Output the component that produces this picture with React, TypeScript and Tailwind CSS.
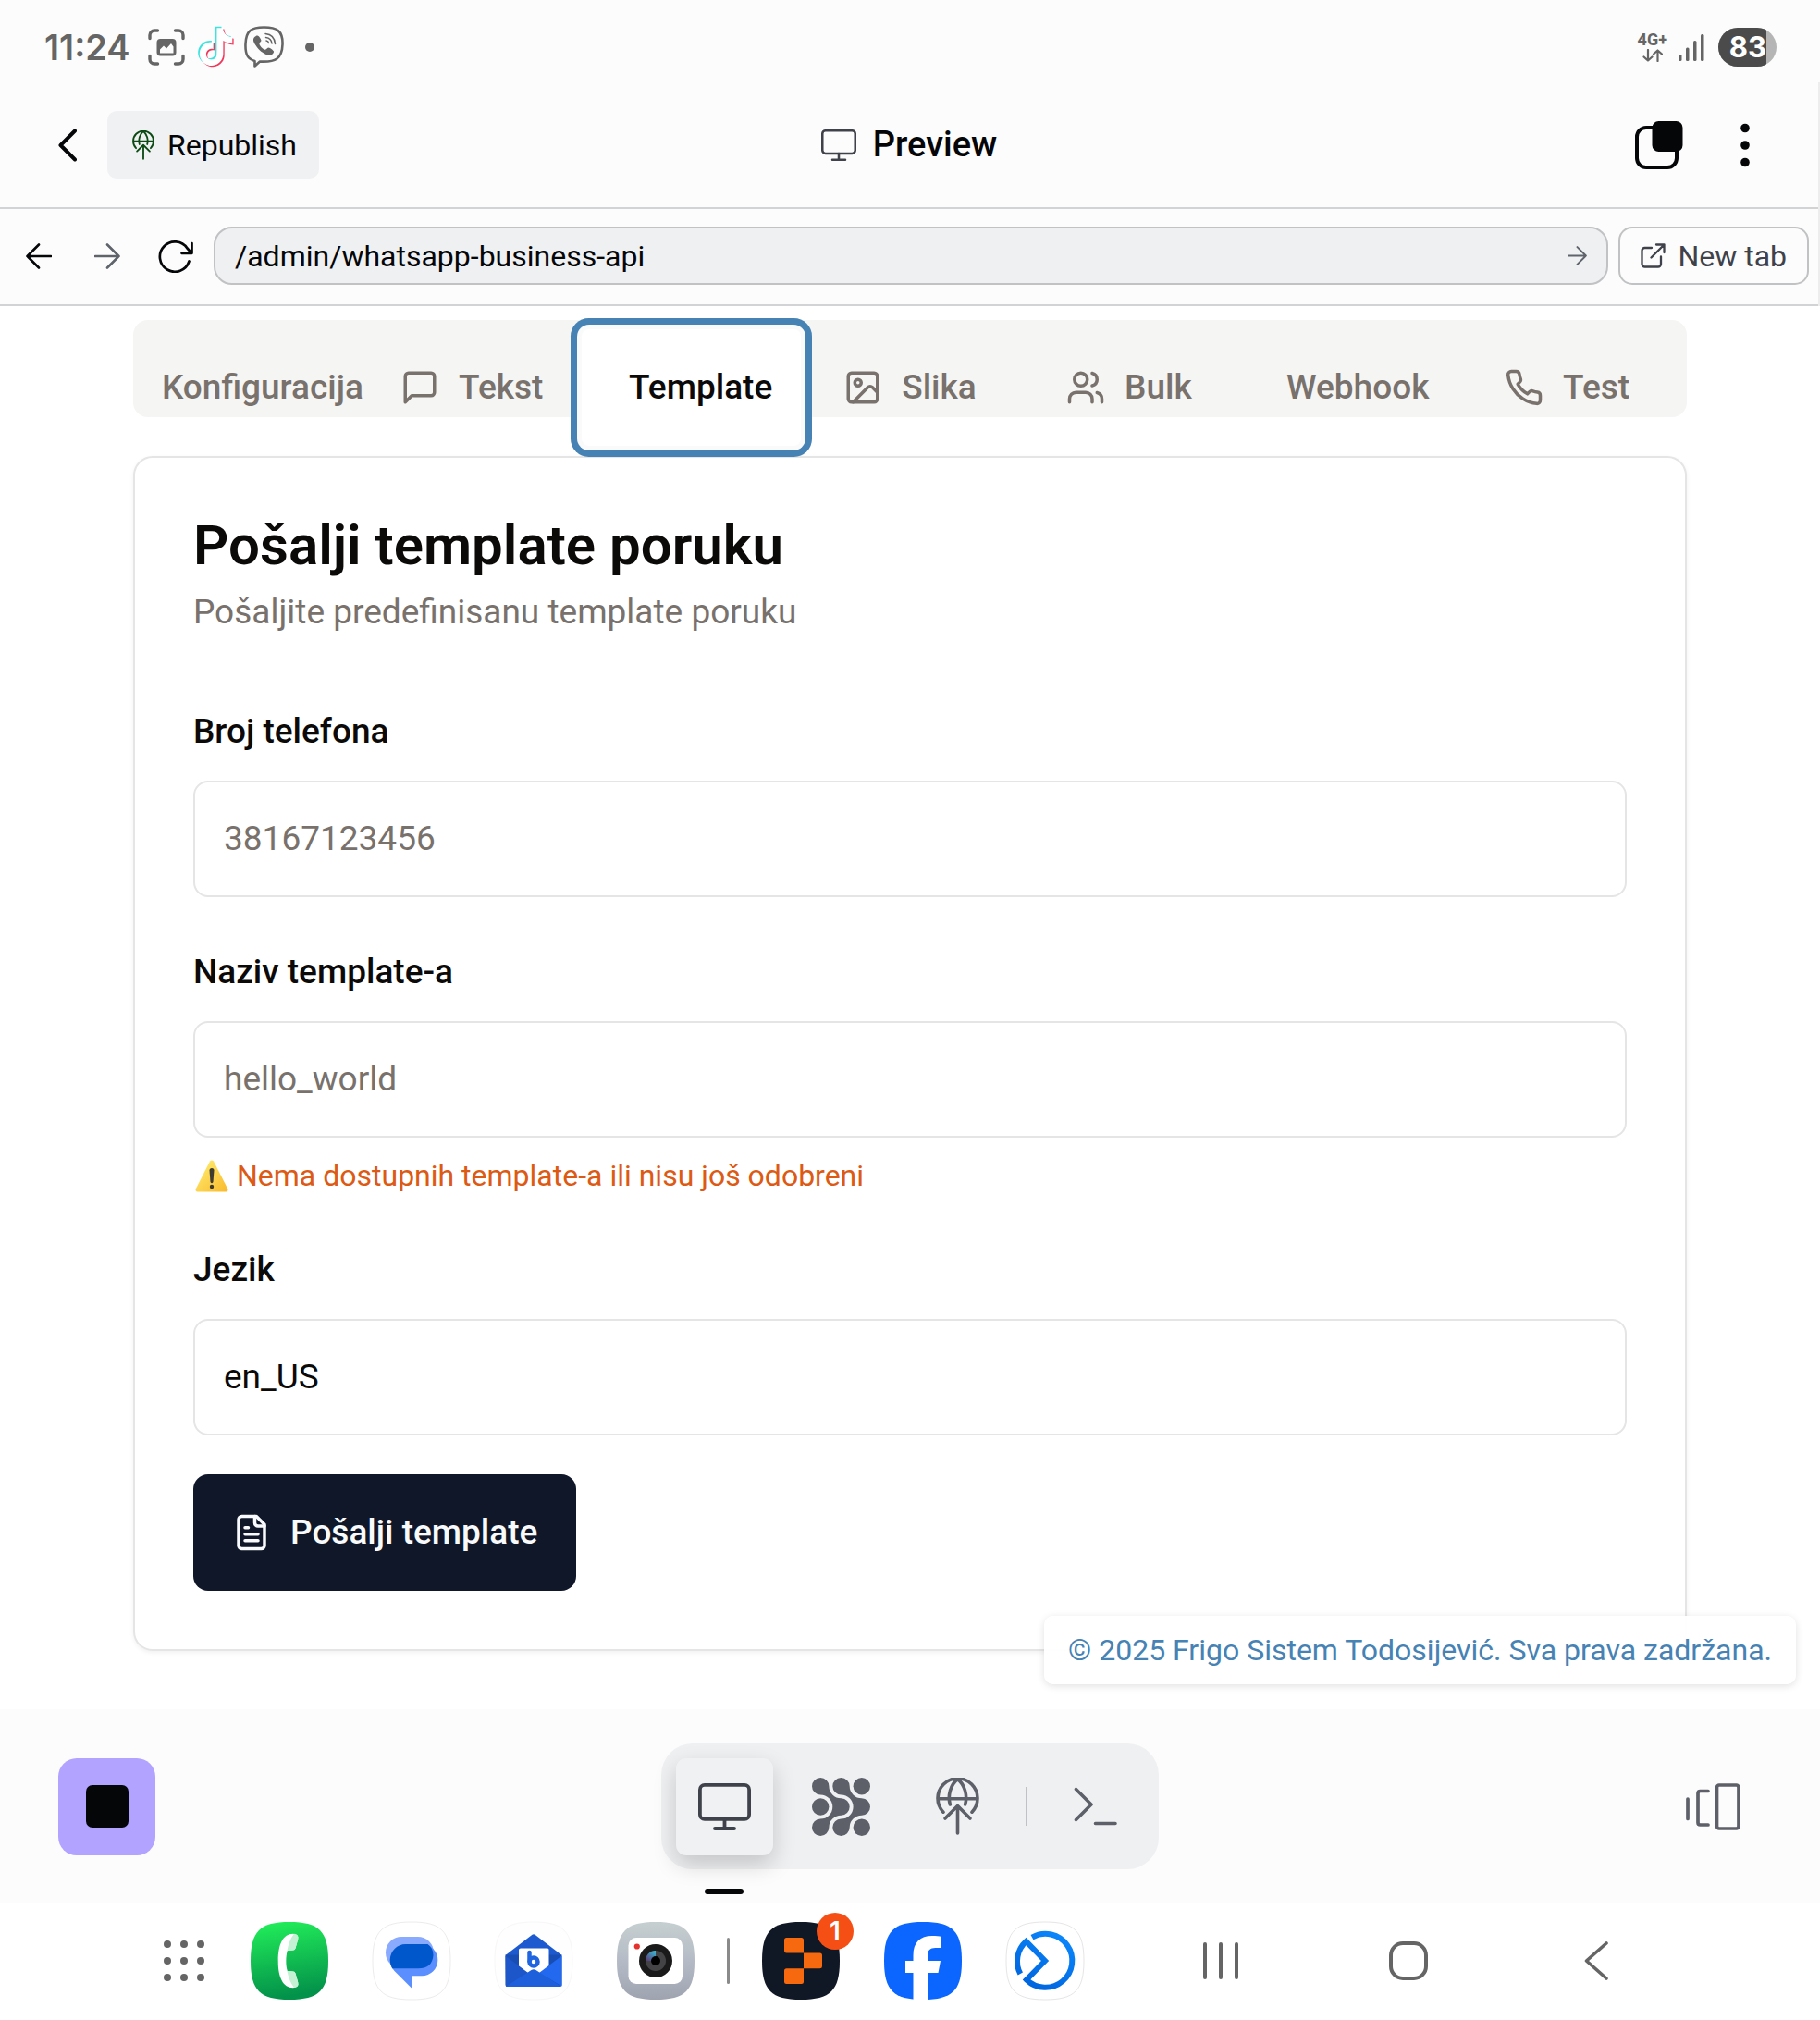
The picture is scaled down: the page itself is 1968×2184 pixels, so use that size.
import React from "react";

const ROBOTO = "font-['Roboto','Noto_Sans',sans-serif]";
const INTER = "font-['Inter',sans-serif]";
const SQUIRCLE = "M42 0C74 0 84 10 84 42S74 84 42 84 0 74 0 42 10 0 42 0Z";

/* ---------- line icons ---------- */

function Line({ className, children }: { className?: string; children: React.ReactNode }) {
  return (
    <svg viewBox="0 0 24 24" fill="none" stroke="currentColor" strokeWidth="2" strokeLinecap="round" strokeLinejoin="round" className={className ?? "size-[42px] shrink-0"} aria-hidden="true">
      {children}
    </svg>
  );
}

const MessageIcon = () => (
  <Line><path d="M21 15a2 2 0 0 1-2 2H7l-4 4V5a2 2 0 0 1 2-2h14a2 2 0 0 1 2 2z" /></Line>
);
const ImageIcon = () => (
  <Line>
    <rect x="3" y="3" width="18" height="18" rx="2" />
    <circle cx="9" cy="9" r="2" />
    <path d="m21 15-3.086-3.086a2 2 0 0 0-2.828 0L6 21" />
  </Line>
);
const UsersIcon = () => (
  <Line>
    <path d="M16 21v-2a4 4 0 0 0-4-4H6a4 4 0 0 0-4 4v2" />
    <circle cx="9" cy="7" r="4" />
    <path d="M22 21v-2a4 4 0 0 0-3-3.87M16 3.13a4 4 0 0 1 0 7.75" />
  </Line>
);
const PhoneIcon = () => (
  <Line>
    <path d="M22 16.92v3a2 2 0 0 1-2.18 2 19.79 19.79 0 0 1-8.63-3.07 19.5 19.5 0 0 1-6-6 19.79 19.79 0 0 1-3.07-8.67A2 2 0 0 1 4.11 2h3a2 2 0 0 1 2 1.72 12.84 12.84 0 0 0 .7 2.81 2 2 0 0 1-.45 2.11L8.09 9.91a16 16 0 0 0 6 6l1.27-1.27a2 2 0 0 1 2.11-.45 12.84 12.84 0 0 0 2.81.7A2 2 0 0 1 22 16.92z" />
  </Line>
);
const FileIcon = () => (
  <Line>
    <path d="M15 2H6a2 2 0 0 0-2 2v16a2 2 0 0 0 2 2h12a2 2 0 0 0 2-2V7Z" />
    <path d="M14 2v4a2 2 0 0 0 2 2h4M10 9H8M16 13H8M16 17H8" />
  </Line>
);

function MonitorIcon({ className }: { className: string }) {
  return (
    <svg viewBox="0 0 57 51" fill="none" stroke="currentColor" strokeWidth="3.8" strokeLinecap="round" className={className} aria-hidden="true">
      <rect x="1.9" y="1.9" width="53.2" height="37" rx="5" />
      <path d="M28.5 39v10M18 49h21" />
    </svg>
  );
}

function PublishIcon({ className }: { className: string }) {
  return (
    <svg viewBox="0 0 47 62" fill="none" stroke="currentColor" strokeWidth="3.6" strokeLinecap="round" strokeLinejoin="round" className={className} aria-hidden="true">
      <path d="M8 37.2A21.5 21.5 0 1 1 39 37.2M2 22.7H45" />
      <path d="M23.5 1.5C16 7.5 12.500 19 15.300 29M23.500 1.500C31 7.500 34.500 19 31.700 29" />
      <path d="M23.500 60V30.500M10 44L23.500 30.500L37 44" />
    </svg>
  );
}

function ArrowIcon({ className, flip }: { className: string; flip?: boolean }) {
  return (
    <svg viewBox="0 0 28 28" fill="none" stroke="currentColor" strokeWidth="2.600" strokeLinecap="round" strokeLinejoin="round" className={className} aria-hidden="true">
      {flip ? <path d="M27 14H1.500M14 1.500L1.500 14L14 26.500" /> : <path d="M1 14H26.500M14 1.500L26.500 14L14 26.500" />}
    </svg>
  );
}

/* ---------- status bar ---------- */

const TIKTOK =
  "M12.525.02c1.31-.02 2.61-.01 3.91-.02.08 1.53.63 3.09 1.75 4.17 1.12 1.11 2.7 1.62 4.24 1.79v4.03c-1.44-.05-2.89-.35-4.2-.97-.57-.26-1.1-.59-1.62-.93-.01 2.92.01 5.84-.02 8.75-.08 1.4-.54 2.79-1.35 3.94-1.31 1.92-3.58 3.17-5.91 3.21-1.43.08-2.86-.31-4.08-1.03-2.02-1.19-3.44-3.37-3.65-5.71-.02-.5-.03-1-.01-1.49.18-1.9 1.12-3.72 2.58-4.96 1.66-1.44 3.98-2.13 6.15-1.72.02 1.48-.04 2.96-.04 4.44-.99-.32-2.15-.23-3.02.37-.63.41-1.11 1.04-1.36 1.75-.21.51-.15 1.07-.14 1.61.24 1.64 1.82 3.02 3.5 2.87 1.12-.01 2.19-.66 2.77-1.61.19-.33.4-.67.41-1.06.1-1.79.06-3.57.07-5.36.01-4.03-.01-8.05.02-12.07z";

function StatusBar() {
  return (
    <div className="flex h-[89px] items-center justify-between pt-3 pr-[47px] pl-12 text-[#656565]">
      <div className="flex items-center">
        <span className={`${INTER} text-[38px] leading-none font-semibold`}>11:24</span>
        <svg viewBox="0 0 40 40" className="ml-[19px] size-10" fill="none" stroke="currentColor" strokeWidth="3.400" strokeLinecap="round" aria-hidden="true">
          <path d="M2 10.500V7a5 5 0 0 1 5-5h3.500M29.500 2H33a5 5 0 0 1 5 5v3.500M38 29.500V33a5 5 0 0 1-5 5h-3.500M10.500 38H7a5 5 0 0 1-5-5v-3.500" />
          <rect x="9.500" y="11" width="21" height="18.500" rx="4" fill="currentColor" stroke="none" />
          <path d="M13 26.500v-4l4-4 3 3 5-5.500 2.500 3.500v7z" fill="#fcfcfc" stroke="none" />
        </svg>
        <svg viewBox="0 0 24 26.600" className="ml-[13px] h-[45px] w-10" aria-hidden="true">
          <g transform="translate(-0.900 0.300) scale(1.020)"><path d={TIKTOK} fill="#3ce4e0" /></g>
          <g transform="translate(0.900 1.900) scale(1.020)"><path d={TIKTOK} fill="#f0385a" /></g>
          <g transform="translate(0.100 1.100) scale(1.020)"><path d={TIKTOK} fill="#ffffff" /></g>
        </svg>
        <svg viewBox="0 0 43 45" className="ml-[11px] h-[45px] w-[43px]" fill="none" stroke="currentColor" aria-hidden="true">
          <path d="M21.500 1.500C8 1.500 2 5 1.500 19.500C1 32 4.500 36 11.500 38V43.500L17 38.500C34 39.500 41 35.500 41.500 20C42 5 35 1.500 21.500 1.500Z" strokeWidth="2.600" strokeLinejoin="round" />
          <path d="M12 11.500C9 13.500 9.500 17 12.500 21C16 26.500 20 29.500 26 32C30 32.500 32.500 29 32 27.500C30 25 27.500 23.500 26 23.500C24 24.500 23.500 26.500 21.500 25.500C19 24 17.500 22 16.500 20C16 18 18 17.500 18.500 16C18 13.500 15.500 10.500 14.500 10.500C13.500 10.300 12.700 11 12 11.500Z" fill="currentColor" stroke="none" />
          <path d="M23 8.500c6 .5 10 4.500 10.500 11M23.500 12.500c4 .5 6 2.500 6.500 6.500M24 16c1.500.2 2.300 1 2.500 2.500" strokeWidth="1.500" strokeLinecap="round" />
        </svg>
        <span className="ml-[23px] size-[10px] rounded-full bg-[#656565]" />
      </div>
      <div className="flex items-center">
        <div className="flex flex-col items-center gap-[2px]">
          <span className={`${ROBOTO} text-[18px] leading-4 font-bold`}>4G+</span>
          <svg viewBox="0 0 22 14" className="h-[14px] w-[22px]" fill="none" stroke="currentColor" strokeWidth="2.200" strokeLinecap="round" strokeLinejoin="round" aria-hidden="true">
            <path d="M6 1v11.500M1.500 8.500L6 12.500L10.500 8.500M16.500 13V1.500M12 5.500L16.500 1.500L21 5.500" />
          </svg>
        </div>
        <svg viewBox="0 0 28 30" className="ml-3 h-[30px] w-7" fill="currentColor" aria-hidden="true">
          <rect x="0" y="23" width="3.500" height="7" rx="1.500" />
          <rect x="8" y="15.500" width="3.500" height="14.500" rx="1.500" />
          <rect x="16" y="8" width="3.500" height="22" rx="1.500" />
          <rect x="24" y="1" width="3.500" height="29" rx="1.500" />
        </svg>
        <div className="ml-[15px] flex h-[42px] w-[63px] overflow-hidden rounded-full bg-[#b5b5b5]">
          <span className={`${INTER} flex w-[52px] items-center justify-end bg-[#4b4b4b] text-[31px] leading-none font-bold text-white`}>83</span>
        </div>
      </div>
    </div>
  );
}

/* ---------- app header and address bar ---------- */

function Header() {
  return (
    <header className="grid h-[137px] grid-cols-[1fr_auto_1fr] items-center border-b-2 border-[#d2d3d4] px-[63px] text-[#050608]">
      <div className="flex items-center gap-[21px]">
        <button aria-label="Back" className="flex h-16 w-8 items-center justify-start">
          <svg viewBox="0 0 20 36" className="h-9 w-5" fill="none" stroke="currentColor" strokeWidth="4" strokeLinecap="round" strokeLinejoin="round" aria-hidden="true">
            <path d="M18 2.500L2.500 18L18 33.500" />
          </svg>
        </button>
        <button className={`${ROBOTO} flex h-[73px] items-center gap-[14px] rounded-[10px] bg-[#eff1f3] pr-6 pl-[27px] text-[32px]`}>
          <PublishIcon className="h-8 w-6 text-[#0c4a14]" />
          Republish
        </button>
      </div>
      <h1 className={`${ROBOTO} flex items-center gap-[18px] text-[38px] font-medium`}>
        <MonitorIcon className="h-[34px] w-[38px] text-[#3f424a]" />
        Preview
      </h1>
      <div className="flex items-center justify-end gap-[51px]">
        <button aria-label="Tabs">
          <svg viewBox="0 0 52 52" className="size-[52px]" aria-hidden="true">
            <rect x="2" y="7" width="43" height="43" rx="10" fill="none" stroke="currentColor" strokeWidth="4" />
            <rect x="18.500" y="0" width="33" height="33" rx="7" fill="currentColor" />
          </svg>
        </button>
        <button aria-label="More" className="flex h-16 w-8 items-center justify-center">
          <svg viewBox="0 0 10 48" className="h-12 w-[10px]" fill="currentColor" aria-hidden="true">
            <circle cx="5" cy="5.500" r="4.800" />
            <circle cx="5" cy="24" r="4.800" />
            <circle cx="5" cy="42.500" r="4.800" />
          </svg>
        </button>
      </div>
    </header>
  );
}

function AddressBar() {
  return (
    <div className="flex h-[105px] items-center border-b-2 border-[#d2d3d4] pr-[10px] pb-[2px] pl-7 text-[#050608]">
      <button aria-label="Go back"><ArrowIcon flip className="size-7" /></button>
      <button aria-label="Go forward" className="ml-[46px] text-[#5f636b]"><ArrowIcon className="size-7" /></button>
      <button aria-label="Reload" className="ml-[41px]">
        <svg viewBox="0 0 38 36" className="h-9 w-[38px]" fill="none" stroke="currentColor" strokeWidth="2.700" strokeLinecap="round" strokeLinejoin="round" aria-hidden="true">
          <path d="M33.500 23.500A16.200 16.200 0 1 1 31.500 9.500L36 14.500M36.500 4V14.800H25.500" />
        </svg>
      </button>
      <div className="ml-[22px] flex h-[63px] flex-1 items-center rounded-[20px] border-2 border-[#c0c2c4] bg-[#eff0f2] px-[21px]">
        <input aria-label="Path" defaultValue="/admin/whatsapp-business-api" className={`${ROBOTO} min-w-0 flex-1 bg-transparent text-[32px] outline-none`} />
        <button aria-label="Go" className="text-[#5f636b]"><ArrowIcon className="size-[21px]" /></button>
      </div>
      <a href="#new-tab" className={`${ROBOTO} ml-[11px] flex h-[63px] items-center gap-[13px] rounded-[15px] border-2 border-[#c0c2c4] px-[22px] text-[32px] text-[#3f424a]`}>
        <svg viewBox="0 0 27 27" className="size-[27px]" fill="none" stroke="currentColor" strokeWidth="2.300" strokeLinecap="round" strokeLinejoin="round" aria-hidden="true">
          <path d="M12 5H4.500A3 3 0 0 0 1.500 8V22.500A3 3 0 0 0 4.500 25.500H19A3 3 0 0 0 22 22.500V14.500M17 1.500H25.500V10M25.500 1.500L11.500 15.500" />
        </svg>
        New tab
      </a>
    </div>
  );
}

/* ---------- page ---------- */

const TABS: { label: string; icon: React.ReactNode; active?: boolean }[] = [
  { label: "Konfiguracija", icon: null },
  { label: "Tekst", icon: <MessageIcon /> },
  { label: "Template", icon: null, active: true },
  { label: "Slika", icon: <ImageIcon /> },
  { label: "Bulk", icon: <UsersIcon /> },
  { label: "Webhook", icon: null },
  { label: "Test", icon: <PhoneIcon /> },
];

function TabList() {
  return (
    <div role="tablist" className="grid h-[105px] grid-cols-7 rounded-[16px] bg-[#f5f5f4] px-[11px] py-[10px]">
      {TABS.map((t) => (
        <button
          key={t.label}
          role="tab"
          aria-selected={!!t.active}
          className={
            t.active
              ? "relative z-10 flex h-[126px] items-center justify-center gap-[21px] rounded-[8px] bg-white text-[37px] font-medium text-[#0c0a09] shadow-[0_0_0_5px_#fafafa,0_0_0_12px_#4682b4]"
              : "flex h-[126px] items-center justify-center gap-[21px] text-[37px] font-medium text-[#78716c]"
          }
        >
          {t.icon ?? <span />}
          {t.label}
        </button>
      ))}
    </div>
  );
}

function Field({ id, label, placeholder, value, note }: { id: string; label: string; placeholder?: string; value?: string; note?: React.ReactNode }) {
  return (
    <div className="flex flex-col">
      <label htmlFor={id} className="mb-5 text-[37px] leading-[66px] font-medium">{label}</label>
      <input
        id={id}
        placeholder={placeholder}
        defaultValue={value}
        className="h-[126px] w-full rounded-[16px] border-2 border-[#e5e5e5] bg-white px-[31px] pb-[2px] text-[37px] outline-none placeholder:text-[#78716c]"
      />
      {note}
    </div>
  );
}

function WarningSign() {
  return (
    <svg viewBox="0 0 36 35" className="h-[35px] w-9" aria-hidden="true">
      <defs>
        <linearGradient id="warn" x1="0" y1="0" x2="1" y2="1">
          <stop offset="0" stopColor="#fff176" />
          <stop offset="1" stopColor="#f9b92b" />
        </linearGradient>
      </defs>
      <path d="M16 1.500Q18 -.5 20 1.500L35.300 31.500Q36 34.500 33.500 34.500H2.500Q0 34.500.7 31.500Z" fill="url(#warn)" />
      <path d="M15.500 11.500Q15.500 9 18 9T20.500 11.500L19.500 24Q18 26.500 16.500 24Z" fill="#3f3a30" />
      <circle cx="18" cy="29" r="2.200" fill="#3f3a30" />
    </svg>
  );
}

function Page() {
  return (
    <main className={`${ROBOTO} relative flex-1 bg-white px-36 pt-[15px] pb-[63px] text-[#0c0a09]`}>
      <TabList />
      <section className="mt-[42px] rounded-[21px] border-2 border-[#e5e5e5] bg-white p-[63px] shadow-[0_2px_5px_rgba(0,0,0,0.06)]">
        <h2 className="text-[60px] leading-[63px] font-semibold">Pošalji template poruku</h2>
        <p className="mt-[15px] text-[37px] leading-[52px] text-[#78716c]">Pošaljite predefinisanu template poruku</p>
        <form className="mt-[70px] flex flex-col gap-12">
          <Field id="phone" label="Broj telefona" placeholder="38167123456" />
          <Field
            id="template"
            label="Naziv template-a"
            placeholder="hello_world"
            note={
              <p className="mt-5 flex items-center gap-[9px] pl-[2px] text-[32px] leading-[42px] text-[#dc5a14]">
                <WarningSign />
                Nema dostupnih template-a ili nisu još odobreni
              </p>
            }
          />
          <div>
            <Field id="lang" label="Jezik" value="en_US" />
            <button type="button" className="mt-[42px] flex h-[126px] items-center gap-[21px] rounded-[16px] bg-[#0f1729] px-[42px] text-[37px] font-medium text-[#f8fafc]">
              <FileIcon />
              Pošalji template
            </button>
          </div>
        </form>
      </section>
      <p className="absolute right-[26px] bottom-[27px] flex h-[74px] items-center rounded-[10px] bg-white/95 px-[26px] text-[32px] text-[#4682b4] shadow-[0_2px_8px_rgba(0,0,0,0.12)]">
        © 2025 Frigo Sistem Todosijević. Sva prava zadržana.
      </p>
    </main>
  );
}

/* ---------- workspace dock ---------- */

const BLOB =
  "M9.200 0A9.200 9.200 0 0 1 18.400 9.200A13.100 13.100 0 0 0 31.500 22.300A9.200 9.200 0 0 1 31.500 40.700A13.100 13.100 0 0 0 18.400 53.800A9.200 9.200 0 1 1 9.200 44.600A13.100 13.100 0 0 0 9.200 18.400A9.200 9.200 0 0 1 9.200 0Z";

function Dock() {
  return (
    <div className="grid h-[210px] grid-cols-[1fr_auto_1fr] items-center bg-[#fcfcfc] px-[63px] text-[#5d6068]">
      <button aria-label="Stop" className="flex size-[105px] items-center justify-center rounded-[20px] bg-[#b1a3ff]">
        <span className="size-[46px] rounded-[7px] bg-[#050608]" />
      </button>
      <div className="flex h-[136px] items-center gap-[21px] rounded-[34px] bg-[#eff0f2] px-4">
        <button aria-label="Preview" className="relative flex size-[105px] items-center justify-center rounded-[11px] bg-[#f0f1f3] text-[#3f424a] shadow-[0_10px_24px_rgba(0,0,0,0.18)]">
          <MonitorIcon className="h-[51px] w-[57px]" />
          <span className="absolute -bottom-[42px] left-[31px] h-[6px] w-[42px] rounded-full bg-[#050608]" />
        </button>
        <button aria-label="Agent" className="flex size-[105px] items-center justify-center">
          <svg viewBox="0 0 63 63" className="size-[63px]" fill="currentColor" aria-hidden="true">
            <path d={BLOB} />
            <path d={BLOB} transform="translate(22.300 0)" />
            <circle cx="53.800" cy="9.200" r="9.200" />
            <circle cx="9.200" cy="31.500" r="9.200" />
            <circle cx="53.800" cy="53.800" r="9.200" />
          </svg>
        </button>
        <button aria-label="Publishing" className="flex size-[105px] items-center justify-center">
          <PublishIcon className="h-[62px] w-[47px]" />
        </button>
        <span className="h-[42px] w-[2px] bg-[#bfc1c4]" />
        <button aria-label="Console" className="flex size-[105px] items-center justify-center">
          <svg viewBox="0 0 47 42" className="h-[42px] w-[47px]" fill="none" stroke="currentColor" strokeWidth="3.600" strokeLinecap="round" strokeLinejoin="round" aria-hidden="true">
            <path d="M2.500 2.500L19 19L2.500 35.500M23.500 39.500H45" />
          </svg>
        </button>
      </div>
      <button aria-label="Switch tabs" className="flex size-[105px] items-center justify-center justify-self-end">
        <svg viewBox="0 0 59 51" className="h-[51px] w-[59px]" fill="none" stroke="currentColor" strokeWidth="3.700" strokeLinecap="round" strokeLinejoin="round" aria-hidden="true">
          <path d="M2 17V38.500M24 8.500H15.500Q13 8.500 13 11V42.500Q13 45 15.500 45H24" />
          <rect x="33.500" y="2" width="23.500" height="47" rx="2.500" />
        </svg>
      </button>
    </div>
  );
}

/* ---------- system navigation ---------- */

function AppIcon({ label, className, children }: { label: string; className?: string; children: React.ReactNode }) {
  return (
    <button aria-label={label} className={className}>
      <svg viewBox="0 0 84 84" className="size-[84px] overflow-visible" aria-hidden="true">{children}</svg>
    </button>
  );
}

function NavBar() {
  return (
    <nav className="flex h-[126px] items-center justify-between bg-white pr-[200px] pb-[2px] pl-[157px] text-[#656565]">
      <div className="flex items-center">
        <button aria-label="All apps" className="mr-[30px] grid size-[84px] grid-cols-[repeat(3,8px)] place-content-center gap-[10px]">
          {Array.from({ length: 9 }, (_, i) => (
            <span key={i} className="size-2 rounded-full bg-[#656565]" />
          ))}
        </button>
        <div className="flex gap-12">
          <AppIcon label="Phone">
            <defs>
              <linearGradient id="call" x1="0" y1="0" x2="0.150" y2="1">
                <stop offset="0" stopColor="#23f05a" />
                <stop offset="1" stopColor="#03924a" />
              </linearGradient>
            </defs>
            <path d={SQUIRCLE} fill="url(#call)" />
            <path d="M46 12.700C35 12.700 29.700 24 29.700 42S35 71.200 46 71.200Q52.500 70.500 51.300 65.500L48.500 55.500Q48 53.600 46 53.500L39.800 53C37.900 47 37.900 37 39.800 31L46 30.500Q48 30.400 48.500 28.500L51.300 18.500Q52.500 13.500 46 12.700Z" fill="#fff" />
            <path d="M47 12.800Q52.500 13.500 51.300 18.500L48.500 28.500Q48 30.400 46 30.500L39.500 31Q41.500 20 47 12.800ZM47 71.100Q52.500 70.500 51.300 65.500L48.500 55.500Q48 53.600 46 53.500L39.500 53Q41.500 64 47 71.100Z" fill="#c4f0d3" />
          </AppIcon>
          <AppIcon label="Messages">
            <path d={SQUIRCLE} fill="#fff" stroke="#ececec" strokeWidth="1" />
            <rect x="14" y="16" width="52" height="34.300" rx="17.150" fill="#8aaaff" />
            <path d="M36 24H53.200A17.150 17.150 0 0 1 53.200 58.300H43V70Q43 72.500 41 70.500L23.500 53Q18.700 48 18.700 41.300A17.300 17.300 0 0 1 36 24Z" fill="#5b8eff" />
            <path d="M36 24H59.500Q65.500 28 65.500 36Q64.500 50.300 49 50.300H21.200Q18.700 46 18.700 41.300A17.300 17.300 0 0 1 36 24Z" fill="#0057cc" />
          </AppIcon>
          <AppIcon label="Mail">
            <path d={SQUIRCLE} fill="#fefefe" stroke="#f7f7f7" strokeWidth="1" />
            <path d="M11.500 36L40.500 13.800Q42 12.800 43.500 13.800L72.500 36Z" fill="#1d5ad0" />
            <path d="M11.500 35.500H72.500V68Q72.500 70 70.500 70H13.500Q11.500 70 11.500 68Z" fill="#184db4" />
            <path d="M28 28.500H57Q58.500 28.500 58.500 30V48L49 55H35L26 48V30Q26 28.500 28 28.500Z" fill="#fff" />
            <path d="M11.500 36.500L36 55L12 70Z" fill="#1d56c8" />
            <path d="M72.500 36.500L48 55L72.500 69.500Z" fill="#2269f0" />
            <path d="M12.500 69.500L39.500 52Q42 50.500 44.500 52L71.500 69.500Q71 70 70 70H13.500Z" fill="#1e60dc" />
            <path d="M37.500 33V42.500" stroke="#2065e0" strokeWidth="4.500" strokeLinecap="round" />
            <circle cx="42" cy="43" r="4.500" fill="none" stroke="#2065e0" strokeWidth="4.500" />
          </AppIcon>
          <AppIcon label="Camera">
            <defs>
              <linearGradient id="cam" x1="0" y1="0" x2="0" y2="1">
                <stop offset="0" stopColor="#c6cfd0" />
                <stop offset="0.550" stopColor="#b2b9c5" />
                <stop offset="1" stopColor="#9fa3b0" />
              </linearGradient>
              <linearGradient id="glass" x1="1" y1="0" x2="0.300" y2="1">
                <stop offset="0" stopColor="#33c4dc" />
                <stop offset="1" stopColor="#5c437e" />
              </linearGradient>
            </defs>
            <path d={SQUIRCLE} fill="url(#cam)" />
            <rect x="12.500" y="17" width="58.500" height="50" rx="8.500" fill="#fff" />
            <circle cx="42" cy="42" r="18" fill="#1a1a1a" />
            <circle cx="42" cy="42" r="11" fill="#444446" />
            <path d="M42 31A11 11 0 0 0 31 42H42Z" fill="url(#glass)" />
            <circle cx="42" cy="42" r="5" fill="#000" />
            <circle cx="21.800" cy="26.500" r="3.100" fill="#e5322d" />
          </AppIcon>
        </div>
        <span className="mx-[35px] h-[50px] w-[3px] rounded-full bg-[#8a8a8a]" />
        <div className="flex gap-12">
          <div className="relative">
            <AppIcon label="Replit" className="block">
              <path d={SQUIRCLE} fill="#111825" />
              <path d="M26.500 17H42.500Q45 17 45 19.500V33.500H26.500Q24 33.500 24 31V19.500Q24 17 26.500 17ZM45 33.500H62.500Q65 33.500 65 36V48Q65 50.300 62.500 50.300H45ZM26.500 50.300H45V64.500Q45 67 42.500 67H26.500Q24 67 24 64.500V52.800Q24 50.300 26.500 50.300Z" fill="#f7690f" />
            </AppIcon>
            <span className={`${INTER} absolute -top-[10px] -right-[15px] flex size-10 items-center justify-center rounded-full bg-[#f64f16] text-[28px] leading-none font-semibold text-white`}>1</span>
          </div>
          <AppIcon label="Facebook">
            <path d={SQUIRCLE} fill="#0a66ff" />
            <path d="M31.500 84V55H23V42H31.500V36C31.500 22 39 15 52 15C56 15 60 15.300 62 16V28H55.500C49.500 28 47 31 47 36V42H61L58.500 55H47V84Z" fill="#fff" />
          </AppIcon>
          <AppIcon label="Business Suite">
            <defs>
              <linearGradient id="suite" x1="0.800" y1="0" x2="0.200" y2="1">
                <stop offset="0" stopColor="#0a86fb" />
                <stop offset="1" stopColor="#0064dd" />
              </linearGradient>
            </defs>
            <path d={SQUIRCLE} fill="#fff" stroke="#e6e6e6" strokeWidth="1" />
            <path d="M28 16.600A29 29 0 1 1 22 62.500L42 42L21.500 21A29 29 0 0 0 15.300 56" fill="none" stroke="url(#suite)" strokeWidth="6" strokeLinejoin="miter" />
          </AppIcon>
        </div>
      </div>
      <div className="flex items-center gap-[119px]">
        <button aria-label="Recent apps" className="flex size-[84px] items-center justify-center gap-[13px]">
          <span className="h-10 w-1 rounded-full bg-[#656565]" />
          <span className="h-10 w-1 rounded-full bg-[#656565]" />
          <span className="h-10 w-1 rounded-full bg-[#656565]" />
        </button>
        <button aria-label="Home" className="flex size-[84px] items-center justify-center">
          <span className="size-[42px] rounded-[15px] border-4 border-[#656565]" />
        </button>
        <button aria-label="Back" className="flex size-[84px] items-center justify-center">
          <svg viewBox="0 0 26 42" className="h-[42px] w-[26px]" fill="none" stroke="currentColor" strokeWidth="3.600" strokeLinecap="round" strokeLinejoin="round" aria-hidden="true">
            <path d="M24 2L2.500 21L24 40" />
          </svg>
        </button>
      </div>
    </nav>
  );
}

export default function App() {
  return (
    <div className="flex min-h-screen flex-col bg-[#fcfcfc]">
      <StatusBar />
      <div className="border-r-2 border-[#ededee]">
        <Header />
        <AddressBar />
      </div>
      <Page />
      <Dock />
      <NavBar />
    </div>
  );
}
